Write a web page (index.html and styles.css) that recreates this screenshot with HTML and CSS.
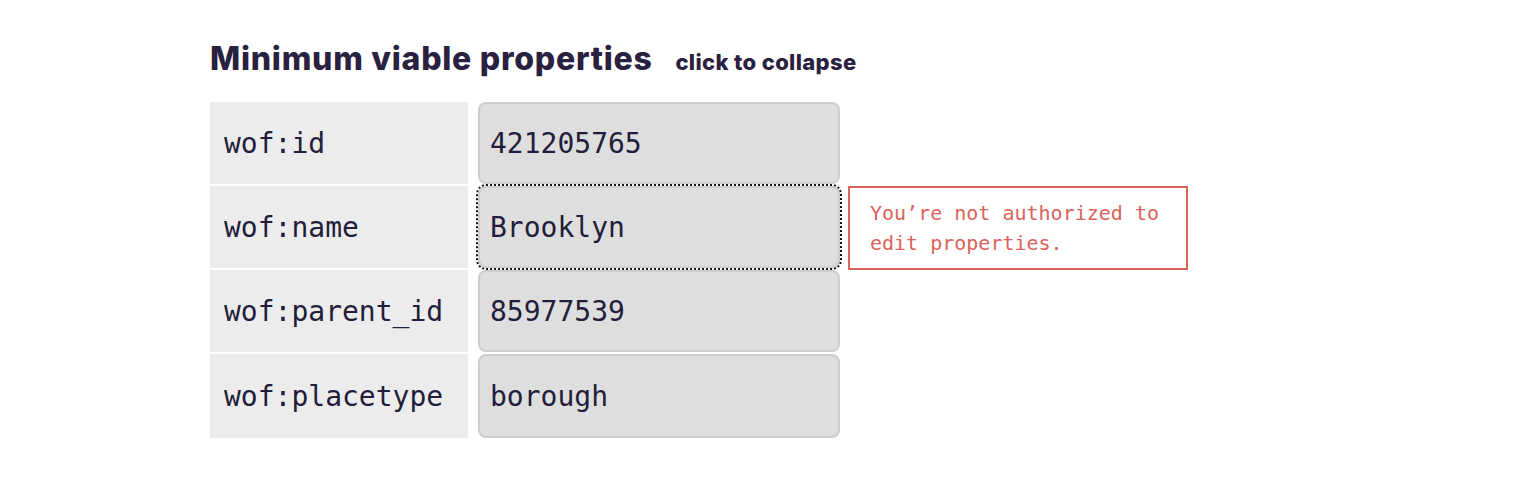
FILE: index.html
```html
<!DOCTYPE html>
<html>
<head>
<meta charset="utf-8">
<link rel="stylesheet" href="styles.css">
</head>
<body>
<main class="page">
  <h2 class="section-title">Minimum viable properties <span class="toggle">click to collapse</span></h2>
  <div class="props">
    <div class="prop-key">wof:id</div>
    <div class="prop-val"><input class="field" type="text" value="421205765" readonly></div>
    <div class="prop-msg"></div>

    <div class="prop-key">wof:name</div>
    <div class="prop-val"><input class="field focused" type="text" value="Brooklyn" readonly></div>
    <div class="prop-msg"><div class="error">You’re not authorized to edit properties.</div></div>

    <div class="prop-key">wof:parent_id</div>
    <div class="prop-val"><input class="field" type="text" value="85977539" readonly></div>
    <div class="prop-msg"></div>

    <div class="prop-key">wof:placetype</div>
    <div class="prop-val"><input class="field" type="text" value="borough" readonly></div>
    <div class="prop-msg"></div>
  </div>
</main>
</body>
</html>
```
FILE: styles.css
```css
html, body {
  margin: 0;
  padding: 0;
  background: #ffffff;
}

.page {
  padding: 38px 0 0 210px;
}

.section-title {
  margin: 0 0 19px 0;
  font-family: "Inter", "Liberation Sans", sans-serif;
  font-weight: 800;
  font-size: 32px;
  line-height: 42px;
  color: #2a2140;
  letter-spacing: 0.75px;
}

.toggle {
  font-size: 22px;
  font-weight: 800;
  margin-left: 15px;
  letter-spacing: 0.35px;
}

.props {
  display: grid;
  grid-template-columns: 258px 362px 348px;
  grid-template-rows: 82px 82px 82px 84px;
  row-gap: 2px;
  column-gap: 0;
}

.prop-key {
  background: #ececec;
  display: flex;
  align-items: center;
  padding-left: 14px;
  font-family: "DejaVu Sans Mono", monospace;
  font-size: 28px;
  color: #231d3a;
}

.prop-val {
  padding-left: 10px;
  display: flex;
}

.field {
  box-sizing: border-box;
  width: 362px;
  height: 100%;
  margin: 0;
  border: 2px solid #cdcdcd;
  border-radius: 8px;
  background: #dedede;
  padding: 0 10px;
  font-family: "DejaVu Sans Mono", monospace;
  font-size: 28px;
  color: #231d3a;
  outline: none;
}

.field.focused {
  outline: 2px dotted #111;
  outline-offset: 0;
}

.prop-msg {
  padding-left: 18px;
}

.error {
  box-sizing: border-box;
  width: 340px;
  height: 84px;
  border: 2px solid #d9645b;
  padding: 10px 20px;
  font-family: "DejaVu Sans Mono", monospace;
  font-size: 20px;
  line-height: 30px;
  color: #d9645b;
}
```
